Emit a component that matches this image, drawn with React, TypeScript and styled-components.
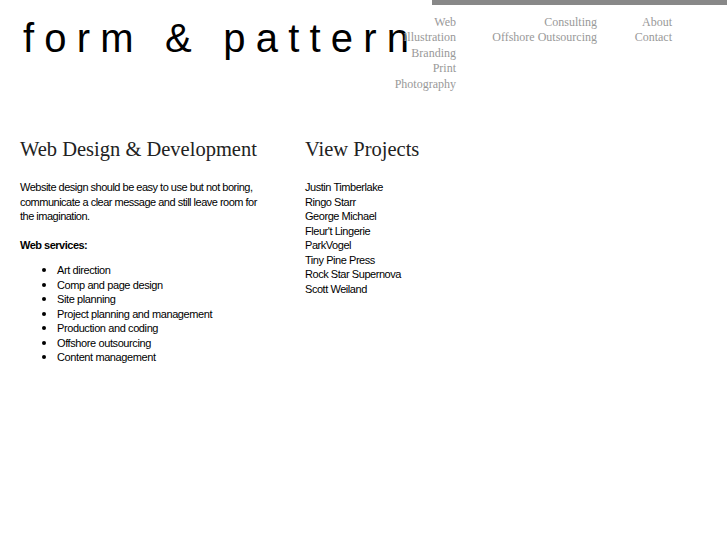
import React from "react";
import styled, { createGlobalStyle } from "styled-components";

const Global = createGlobalStyle`
  html, body { margin: 0; padding: 0; background: #fff; }
  body { font-family: "Liberation Sans", Arial, sans-serif; color: #000; }
`;

const Page = styled.div`
  width: 727px;
  min-height: 545px;
`;

const Header = styled.header`
  display: grid;
  grid-template-columns: 1fr;
  height: 110px;
`;

const Logo = styled.div`
  grid-area: 1 / 1;
  align-self: start;
  margin: 15px 0 0 23px;
  font-family: "Liberation Sans", Arial, sans-serif;
  font-size: 40px;
  line-height: 46px;
  letter-spacing: 10.2px;
  white-space: nowrap;
  color: #000;
`;

const NavArea = styled.div`
  grid-area: 1 / 1;
  justify-self: end;
  width: 295px;
  display: flex;
  flex-direction: column;
`;

const Bar = styled.div`
  height: 5px;
  background: #888;
`;

const Nav = styled.nav`
  display: flex;
  margin-top: 9.5px;
  margin-left: -100px;
`;

const NavCol = styled.ul<{ $w: number }>`
  list-style: none;
  margin: 0;
  padding: 0;
  width: ${(p) => p.$w}px;
  text-align: right;
`;

const NavItem = styled.li`
  font-family: "Liberation Serif", "Times New Roman", serif;
  font-size: 12px;
  line-height: 15.5px;
  color: #999;
`;

const Main = styled.main`
  display: grid;
  grid-template-columns: 285px 260px;
  padding: 26px 0 0 20px;
`;

const Col = styled.section``;

const Heading = styled.h2`
  margin: 0 0 18px;
  font-family: "Liberation Serif", "Times New Roman", serif;
  font-weight: normal;
  font-size: 20.5px;
  line-height: 26px;
  color: #222;
`;

const Text = styled.p<{ $bold?: boolean }>`
  margin: 0 0 ${(p) => (p.$bold ? "10.5px" : "14.5px")};
  width: 248px;
  font-size: 11px;
  line-height: 14.5px;
  letter-spacing: -0.5px;
  font-weight: ${(p) => (p.$bold ? "bold" : "normal")};
`;

const List = styled.ul`
  margin: 0;
  padding: 0 0 0 37px;
  font-size: 11px;
  line-height: 14.5px;
  letter-spacing: -0.4px;
`;

const ListItem = styled.li`
  height: 14.5px;
  &::marker {
    font-size: 13px;
  }
`;

const Plain = styled.ul`
  list-style: none;
  margin: 0;
  padding: 0;
  font-size: 11px;
  line-height: 14.5px;
  letter-spacing: -0.45px;
`;

const nav1 = ["Web", "Illustration", "Branding", "Print", "Photography"];
const nav2 = ["Consulting", "Offshore Outsourcing"];
const nav3 = ["About", "Contact"];
const services = [
  "Art direction",
  "Comp and page design",
  "Site planning",
  "Project planning and management",
  "Production and coding",
  "Offshore outsourcing",
  "Content management",
];
const projects = [
  "Justin Timberlake",
  "Ringo Starr",
  "George Michael",
  "Fleur't Lingerie",
  "ParkVogel",
  "Tiny Pine Press",
  "Rock Star Supernova",
  "Scott Weiland",
];

export default function App() {
  return (
    <Page>
      <Global />
      <Header>
        <Logo>form &amp; pattern</Logo>
        <NavArea>
          <Bar />
          <Nav>
            <NavCol $w={124}>
              {nav1.map((n) => (
                <NavItem key={n}>{n}</NavItem>
              ))}
            </NavCol>
            <NavCol $w={141}>
              {nav2.map((n) => (
                <NavItem key={n}>{n}</NavItem>
              ))}
            </NavCol>
            <NavCol $w={75}>
              {nav3.map((n) => (
                <NavItem key={n}>{n}</NavItem>
              ))}
            </NavCol>
          </Nav>
        </NavArea>
      </Header>
      <Main>
        <Col>
          <Heading>Web Design &amp; Development</Heading>
          <Text>
            Website design should be easy to use but not boring, communicate a
            clear message and still leave room for the imagination.
          </Text>
          <Text $bold>Web services:</Text>
          <List>
            {services.map((s) => (
              <ListItem key={s}>{s}</ListItem>
            ))}
          </List>
        </Col>
        <Col>
          <Heading>View Projects</Heading>
          <Plain>
            {projects.map((p) => (
              <li key={p}>{p}</li>
            ))}
          </Plain>
        </Col>
      </Main>
    </Page>
  );
}
